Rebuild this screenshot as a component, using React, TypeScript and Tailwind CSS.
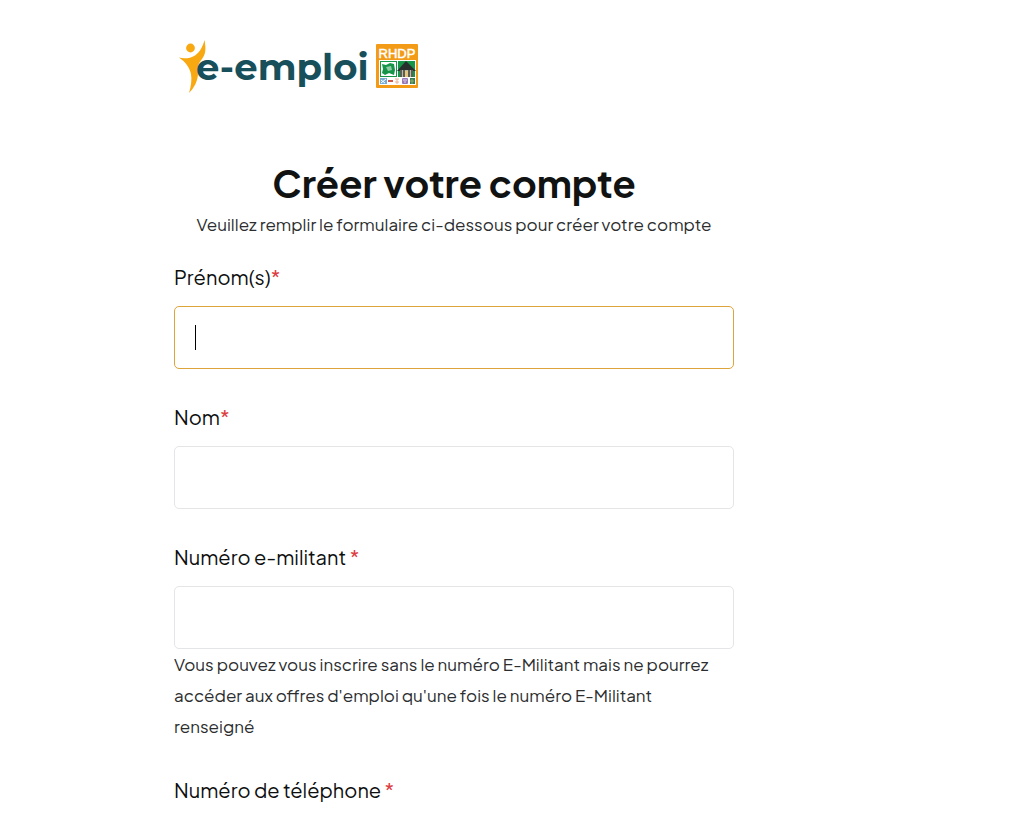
import React, { useState } from 'react';

const labelClass = "block text-xl leading-[33px] text-[#0e0f0f]";
const inputClass = "block w-full h-[63px] mt-[13px] px-5 text-lg rounded-[5px] border border-[#e4e5e7] focus:border-[#dda43b] bg-white focus:outline-none";

function Logo() {
  return (
    <svg width="242" height="56" viewBox="0 0 242 56" role="img" aria-label="e-emploi RHDP">
      <circle cx="12.5" cy="8" r="4.4" fill="#f8a912" />
      <path d="M1 17.500C6 19 12 18.500 17 15.500C22 12 25 6 26.500 0C28 8 28 14 24 19C20 24 19 28 20 33C20 41 16 48 11 53C13 46 14 40 13 34C11 26 7 22 1 17.500Z" fill="#f8a912" />
      <text x="18" y="40" fontSize="37" fontWeight="700" fill="#17505a" className="font-['Montserrat','Inter',sans-serif]">e-emploi</text>

      <rect x="198" y="4" width="42" height="44" rx="1" fill="#f39a16" />
      <text x="219" y="18" fontSize="13" fontWeight="400" fill="#fff" stroke="#fff" strokeWidth="0.5" textAnchor="middle" className="font-['Liberation_Sans',sans-serif]">RHDP</text>
      <rect x="201" y="20" width="37" height="25" fill="#fff" />
      <rect x="202" y="21" width="17" height="16" fill="#159548" />
      <path d="M203 22H218V36H203Z" fill="#fff" />
      <path d="M204 24L208 25L212 23L216 24L217 30L216 35L211 33L207 35L204 33L205 29Z" fill="#159548" />
      <path d="M208 27L213 26L214 30L210 31Z" fill="#8fcca6" />
      <rect x="220" y="21" width="17" height="16" fill="#159548" />
      <path d="M219 31L228 21L238 31Z" fill="#27302d" />
      <path d="M222 30H235V37H222Z" fill="#b9b8a5" />
      <path d="M223 30V37M226 30V37M231 30V37M234 30V37" stroke="#343936" strokeWidth="1.4" />
      <path d="M227 31H230V37H227Z" fill="#e6c581" />
      <rect x="202" y="38" width="7" height="6" fill="#76acd3" />
      <path d="M203 43L208 39M203 40L207 43" stroke="#fff" />
      <path d="M210 40H215V42H210Z" fill="#cf594d" />
      <path d="M217 39H221M219 39V44M217 42H221" stroke="#e8b09a" />
      <rect x="224" y="38" width="6" height="6" rx="1" fill="#9879b8" />
      <path d="M225 40H229M226 42H228" stroke="#dfd4ec" />
      <path d="M232 38H237V44H232Z" fill="#347c54" />
      <path d="M232 41H236M234 39V44" stroke="#8daf6f" />
    </svg>
  );
}

function Required() {
  return <span className="text-[#dc3f45]">*</span>;
}

export default function App() {
  const [firstName, setFirstName] = useState("");
  const [lastName, setLastName] = useState("");
  const [memberNumber, setMemberNumber] = useState("");
  const [phone, setPhone] = useState("");

  return (
    <div className="h-screen overflow-hidden bg-white font-['Plus_Jakarta_Sans','Inter',sans-serif]">
      <div className="w-full max-w-[908px]">
        <main className="w-full max-w-[560px] mx-auto pt-10">
          <a href="#" className="block w-fit ml-1">
            <Logo />
          </a>

          <div className="mt-16 text-center">
            <h1 className="text-[38px] leading-[46px] font-bold text-[#111212]">Créer votre compte</h1>
            <p className="text-[17px] leading-9 text-[#2b2d2e]">Veuillez remplir le formulaire ci-dessous pour créer votre compte</p>
          </div>

          <form className="mt-[18px] space-y-[31px]" onSubmit={e => e.preventDefault()}>
            <div>
              <label htmlFor="firstName" className={labelClass}>Prénom(s)<Required /></label>
              <div className="relative">
                <input id="firstName" type="text" value={firstName} onChange={e => setFirstName(e.target.value)} className={`${inputClass} caret-transparent`} autoFocus required />
                {firstName === "" && <span className="absolute left-[21px] inset-y-[19px] w-px bg-black pointer-events-none"></span>}
              </div>
            </div>

            <div>
              <label htmlFor="lastName" className={labelClass}>Nom<Required /></label>
              <input id="lastName" type="text" value={lastName} onChange={e => setLastName(e.target.value)} className={inputClass} required />
            </div>

            <div>
              <label htmlFor="memberNumber" className={labelClass}>Numéro e-militant <Required /></label>
              <input id="memberNumber" type="text" value={memberNumber} onChange={e => setMemberNumber(e.target.value)} aria-describedby="memberHelp" className={inputClass} required />
              <p id="memberHelp" className="text-[17px] leading-[31px] text-[#2b2d2e]">
                Vous pouvez vous inscrire sans le numéro E-Militant mais ne pourrez accéder aux offres d'emploi qu'une fois le numéro E-Militant renseigné
              </p>
            </div>

            <div>
              <label htmlFor="phone" className={labelClass}>Numéro de téléphone <Required /></label>
              <input id="phone" type="tel" value={phone} onChange={e => setPhone(e.target.value)} className={inputClass} required />
            </div>
          </form>
        </main>
      </div>
    </div>
  );
}
